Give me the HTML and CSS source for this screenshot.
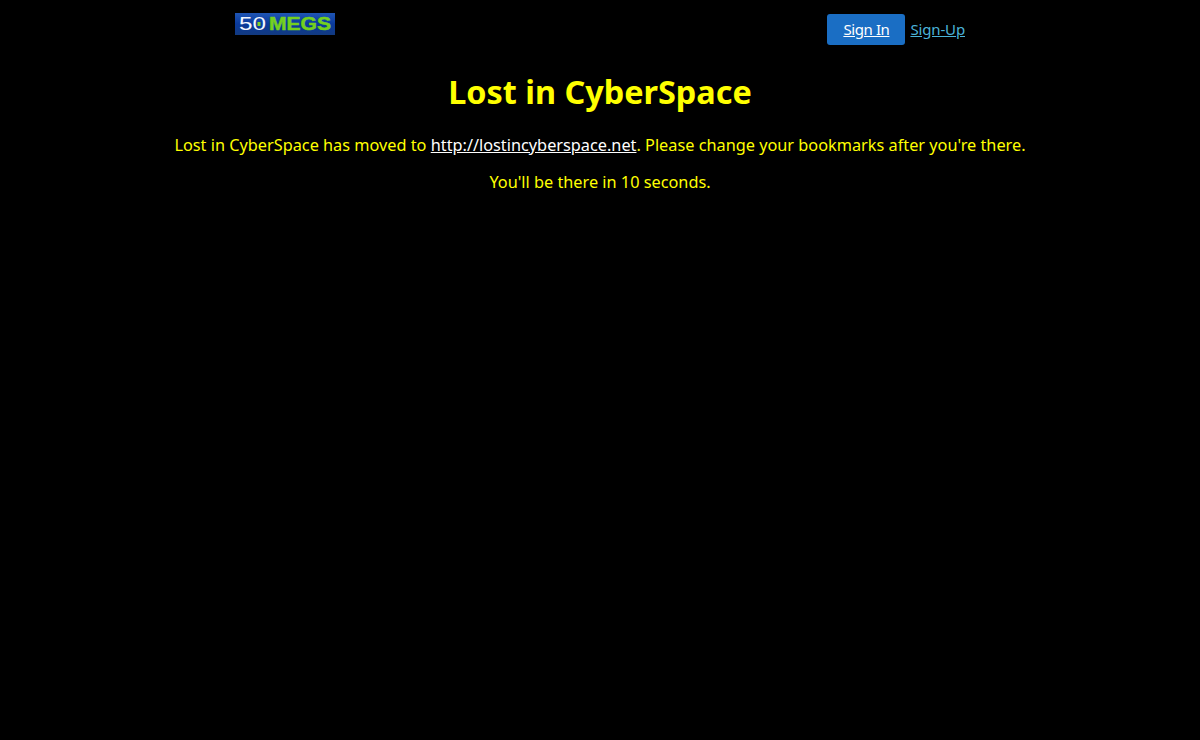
FILE: index.html
```html
<!DOCTYPE html>
<html lang="en">
<head>
    <meta charset="UTF-8">
    <title>Lost in CyberSpace</title>
    <link rel="stylesheet" href="styles.css">
</head>
<body>

<div class="topbar">
    <a class="logo" href="#">
        <svg width="100" height="22" viewBox="0 0 100 22">
            <defs>
                <linearGradient id="logoBg" x1="0" y1="0" x2="0" y2="1">
                    <stop offset="0" stop-color="#1f55b4"/>
                    <stop offset="0.5" stop-color="#0a3a9c"/>
                    <stop offset="1" stop-color="#123a80"/>
                </linearGradient>
            </defs>
            <rect width="100" height="22" fill="url(#logoBg)"/>
            <text class="logo-num" x="4" y="17" textLength="27" lengthAdjust="spacingAndGlyphs">50</text>
            <rect x="22.5" y="9" width="3" height="4" fill="#7ed321"/>
            <text class="logo-megs" x="34" y="17" textLength="62" lengthAdjust="spacingAndGlyphs">MEGS</text>
        </svg>
    </a>
    <div class="account">
        <a class="signin" href="#">Sign In</a>
        <a class="signup" href="#">Sign-Up</a>
    </div>
</div>

<div class="content">
    <h1>Lost in CyberSpace</h1>
    <p>Lost in CyberSpace has moved to <a href="#">http://lostincyberspace.net</a>. Please change your bookmarks after you're there.</p>
    <p>You'll be there in 10 seconds.</p>
</div>

</body>
</html>
```

FILE: styles.css
```css
body {
    margin: 0;
    height: 740px;
    overflow: hidden;
    background-color: #000000;
    color: #ffff00;
    font-family: "Noto Sans", sans-serif;
    font-size: 16.3px;
}
.topbar {
    display: flex;
    justify-content: space-between;
    align-items: flex-start;
    width: 730px;
    margin: 0 auto;
    padding-top: 13px;
    height: 32px;
}
.logo {
    display: block;
    width: 100px;
    height: 22px;
}
.logo svg {
    display: block;
}
.logo-num {
    font-family: "Liberation Sans", sans-serif;
    font-size: 17.5px;
    fill: #f2f6ff;
}
.logo-megs {
    font-family: "Liberation Sans", sans-serif;
    font-size: 18px;
    font-weight: bold;
    fill: #74d01e;
    stroke: #74d01e;
    stroke-width: 0.5px;
}
.account {
    display: flex;
    align-items: flex-start;
    gap: 5px;
    margin-top: 1px;
}
.signin {
    display: block;
    width: 78px;
    height: 31px;
    line-height: 31px;
    text-align: center;
    background-color: #1a6ec4;
    border-radius: 3px;
    color: #ffffff;
    font-size: 15px;
    letter-spacing: -0.4px;
}
.signup {
    color: #4bb3d8;
    font-size: 15px;
    line-height: 30px;
    letter-spacing: -0.15px;
}
.content {
    text-align: center;
}
h1 {
    margin: 24px 0 0;
    font-size: 32.4px;
    line-height: 45px;
    font-weight: bold;
}
p {
    margin: 15px 0 0;
    line-height: 22px;
}
h1 + p {
    margin-top: 20px;
}
p a {
    color: #ffffff;
}
```
